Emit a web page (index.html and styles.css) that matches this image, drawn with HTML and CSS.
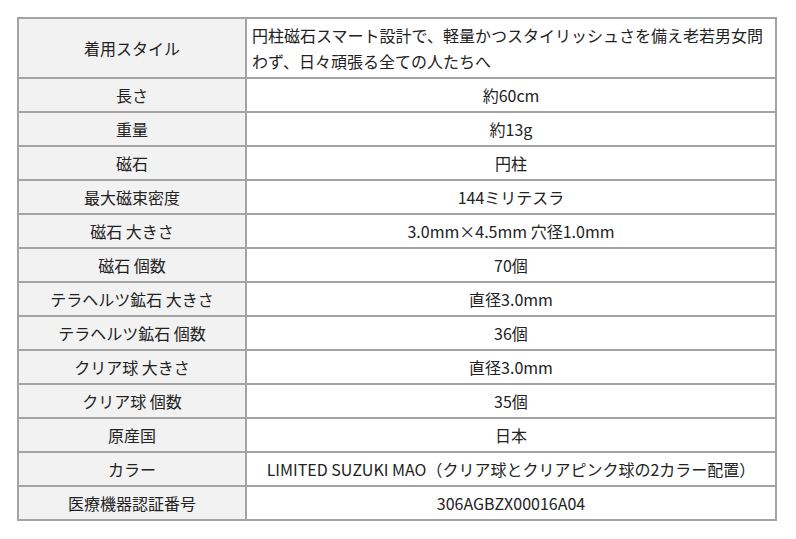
FILE: index.html
```html
<!DOCTYPE html>
<html lang="ja">
<head>
<meta charset="utf-8">
<link rel="stylesheet" href="styles.css">
</head>
<body>
<table class="spec">
  <colgroup><col class="c-label"><col class="c-value"></colgroup>
  <tbody>
    <tr><th>着用スタイル</th><td class="left">円柱磁石スマート設計で、軽量かつスタイリッシュさを備え老若男女問わず、日々頑張る全ての人たちへ</td></tr>
    <tr><th>長さ</th><td>約60cm</td></tr>
    <tr><th>重量</th><td>約13g</td></tr>
    <tr><th>磁石</th><td>円柱</td></tr>
    <tr><th>最大磁束密度</th><td>144ミリテスラ</td></tr>
    <tr><th>磁石 大きさ</th><td>3.0mm×4.5mm 穴径1.0mm</td></tr>
    <tr><th>磁石 個数</th><td>70個</td></tr>
    <tr><th>テラヘルツ鉱石 大きさ</th><td>直径3.0mm</td></tr>
    <tr><th>テラヘルツ鉱石 個数</th><td>36個</td></tr>
    <tr><th>クリア球 大きさ</th><td>直径3.0mm</td></tr>
    <tr><th>クリア球 個数</th><td>35個</td></tr>
    <tr><th>原産国</th><td>日本</td></tr>
    <tr><th>カラー</th><td>LIMITED SUZUKI MAO（クリア球とクリアピンク球の2カラー配置）</td></tr>
    <tr><th>医療機器認証番号</th><td>306AGBZX00016A04</td></tr>
  </tbody>
</table>
</body>
</html>
```
FILE: styles.css
```css
html, body {
  margin: 0;
  padding: 0;
  background: #ffffff;
}
body {
  padding: 17px 0 0 17px;
  font-family: "Noto Sans CJK JP", "Noto Sans", sans-serif;
  font-size: 16px;
  color: #222222;
}
.spec {
  border-collapse: separate;
  border-spacing: 0;
  width: 760px;
  table-layout: fixed;
  border-top: 2px solid #a3a3a3;
  border-left: 2px solid #a3a3a3;
}
.c-label { width: 228px; }
.spec tr {
  height: 34px;
}
.spec th,
.spec td {
  border-right: 2px solid #a3a3a3;
  border-bottom: 2px solid #a3a3a3;
  padding: 0 5px;
  line-height: 26px;
  font-weight: 400;
  text-align: center;
  vertical-align: middle;
  overflow: hidden;
}
.spec th {
  background: #f2f2f2;
}
.spec td.left {
  text-align: left;
  padding: 3px 5px;
}
```
